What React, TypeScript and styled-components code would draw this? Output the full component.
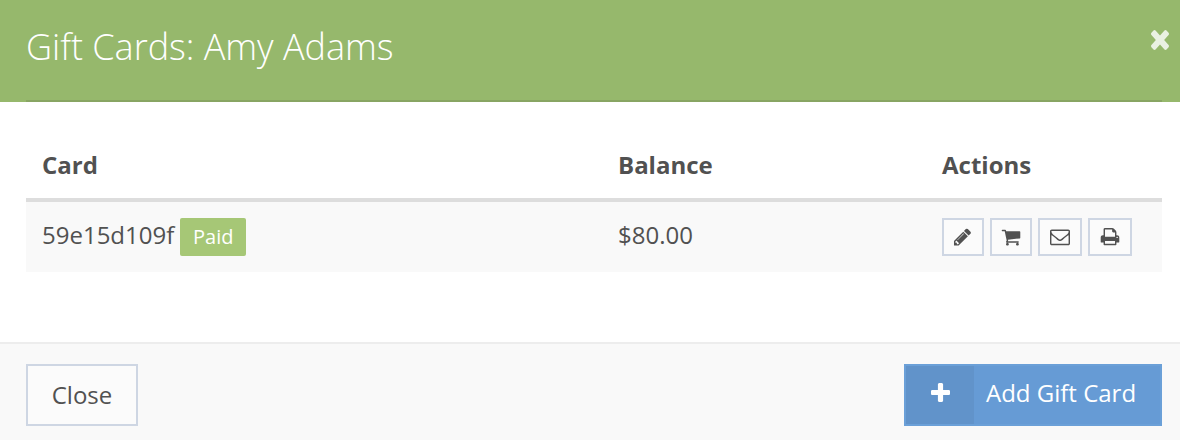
import React from "react";
import styled, { createGlobalStyle } from "styled-components";

const Global = createGlobalStyle`
  * { box-sizing: border-box; }
  body { margin: 0; background: #fff; font-family: "Open Sans", sans-serif; color: #515151; overflow: hidden; }
  button { font-family: inherit; cursor: pointer; }
`;
const Dialog = styled.div`display: flex; flex-direction: column; width: 1180px; height: 440px;`;
const Header = styled.header`
  display: flex; justify-content: space-between; align-items: flex-start;
  height: 102px; padding: 0 11px 0 26px; background: #96b86c; position: relative;
  &::after { content: ""; position: absolute; left: 26px; right: 18px; bottom: 0; height: 2px; background: #88a563; }
`;
const Title = styled.h1`margin: 22px 0 0; font-size: 36px; font-weight: 300; line-height: 50px; letter-spacing: -0.02px; color: #fff;`;
const Dismiss = styled.button`margin: 30px 0 0; padding: 0; border: 0; background: none; color: #eaf1e2;`;
const Body = styled.main`flex: 1; padding: 28px 18px 0 26px;`;
const Columns = styled.div`
  display: grid; grid-template-columns: 576px 324px 1fr; align-items: start; padding-left: 16px;
  font-size: 24px; line-height: 34px;
`;
const HeadRow = styled(Columns)`height: 72px; padding-top: 18px; font-weight: 700; border-bottom: 4px solid #ddd;`;
const CardRow = styled(Columns)`height: 70px; padding-top: 16px; background: #f9f9f9;`;
const Cell = styled.div`display: flex; align-items: flex-start;`;
const Badge = styled.span`
  margin-left: 6px; width: 66px; height: 38px; border-radius: 2px; background: #a6c776; color: #fff;
  font-size: 20px; line-height: 38px; text-align: center;
`;
const Actions = styled.div`display: flex; gap: 6px;`;
const IconButton = styled.button<{ $w: number }>`
  display: flex; align-items: center; justify-content: center; padding: 0;
  width: ${(p) => p.$w}px; height: 38px; border: 2px solid #ced6e3; background: #fbfbfb; color: #515151;
`;
const Footer = styled.footer`
  display: flex; justify-content: space-between; height: 98px; padding: 20px 18px 0 26px;
  background: #f9f9f9; border-top: 2px solid #ededed;
`;
const CloseButton = styled.button`
  width: 112px; height: 62px; padding: 0; border: 2px solid #ced6e3; background: #fbfbfb; color: #515151;
  font-size: 24px; line-height: 58px;
`;
const AddButton = styled.button`
  display: flex; width: 258px; height: 62px; padding: 0; border: 2px solid #6ba0d8; background: #669bd5; color: #fff;
  font-size: 24px; line-height: 54px;
`;
const AddIcon = styled.span`
  display: flex; width: 68px; height: 58px; padding: 17px 0 0 25px; background: #6193ca;
`;
const AddLabel = styled.span`flex: 1; padding-left: 12px; text-align: left; white-space: nowrap;`;
const Glyph = styled.svg`display: block; flex: none; fill: currentColor; overflow: visible;`;

const paths = {
  pencil: "M491 1536l91-91-235-235-91 91v107h128v128h107zm523-928q0-22-22-22-10 0-17 7l-542 542q-7 7-7 17 0 22 22 22 10 0 17-7l542-542q7-7 7-17zm-54-192l416 416-832 832h-416v-416zm683 96q0 53-37 90l-166 166-416-416 166-165q36-38 90-38 53 0 91 38l235 234q37 39 37 91z",
  cart: "M704 1536q0 52-38 90t-90 38-90-38-38-90 38-90 90-38 90 38 38 90zm896 0q0 52-38 90t-90 38-90-38-38-90 38-90 90-38 90 38 38 90zm128-1088v512q0 24-16.5 42.5t-40.5 21.5l-1044 122q13 60 13 70 0 16-24 64h920q26 0 45 19t19 45-19 45-45 19h-1024q-26 0-45-19t-19-45q0-11 8-31.5t16-36 21.5-40 15.5-29.5l-177-823h-204q-26 0-45-19t-19-45 19-45 45-19h256q16 0 28.5 6.5t19.5 15.5 13 24.5 8 26 5.5 29.5 4.5 26h1201q26 0 45 19t19 45z",
  envelope: "M1664 1504v-768q-32 36-69 66-268 206-426 338-51 43-83 67t-86.5 48.5-102.5 24.5h-2q-48 0-102.5-24.5t-86.5-48.5-83-67q-158-132-426-338-37-30-69-66v768q0 13 9.5 22.5t22.5 9.5h1472q13 0 22.5-9.5t9.5-22.5zm0-1051v-24.5l-.5-13-3-12.5-5.5-9-9-7.5-14-2.5h-1472q-13 0-22.5 9.5t-9.5 22.5q0 168 147 284 193 152 401 317 6 5 35 29.5t46 37.5 44.5 31.5 50.5 27.5 43 9h2q20 0 43-9t50.5-27.5 44.5-31.5 46-37.5 35-29.5q208-165 401-317 54-43 100.5-115.5t46.5-131.5zm128-37v1088q0 66-47 113t-113 47h-1472q-66 0-113-47t-47-113v-1088q0-66 47-113t113-47h1472q66 0 113 47t47 113z",
  print: "M448 1536h896v-256h-896v256zm0-640h896v-384h-160q-40 0-68-28t-28-68v-160h-640v640zm1152 64q0-26-19-45t-45-19-45 19-19 45 19 45 45 19 45-19 19-45zm128 0v416q0 13-9.5 22.5t-22.5 9.5h-224v160q0 40-28 68t-68 28h-960q-40 0-68-28t-28-68v-160h-224q-13 0-22.5-9.5t-9.5-22.5v-416q0-79 56.5-135.5t135.5-56.5h64v-544q0-40 28-68t68-28h672q40 0 88 20t76 48l152 152q28 28 48 76t20 88v256h64q79 0 135.5 56.5t56.5 135.5z",
  plus: "M1600 736v192q0 40-28 68t-68 28h-416v416q0 40-28 68t-68 28h-192q-40 0-68-28t-28-68v-416h-416q-40 0-68-28t-28-68v-192q0-40 28-68t68-28h416v-416q0-40 28-68t68-28h192q40 0 68 28t28 68v416h416q40 0 68 28t28 68z",
  times: "M1490 1322q0 40-28 68l-136 136q-28 28-68 28t-68-28l-294-294-294 294q-28 28-68 28t-68-28l-136-136q-28-28-28-68t28-68l294-294-294-294q-28-28-28-68t28-68l136-136q28-28 68-28t68 28l294 294 294-294q28-28 68-28t68 28l136 136q28 28 28 68t-28 68l-294 294 294 294q28 28 28 68z",
};

interface IconProps { name: keyof typeof paths; width?: number; height?: number; box?: string }

function Icon({ name, width = 20, height = 20, box = "0 0 1792 1792" }: IconProps) {
  return <Glyph width={width} height={height} viewBox={box} preserveAspectRatio="none"><path d={paths[name]} /></Glyph>;
}

export default function App() {
  return (
    <Dialog>
      <Global />
      <Header>
        <Title>Gift Cards: Amy Adams</Title>
        <Dismiss aria-label="Dismiss"><Icon name="times" width={18} height={20} box="302 366 1188 1188" /></Dismiss>
      </Header>
      <Body>
        <HeadRow><Cell>Card</Cell><Cell>Balance</Cell><Cell>Actions</Cell></HeadRow>
        <CardRow>
          <Cell>59e15d109f<Badge>Paid</Badge></Cell>
          <Cell>$80.00</Cell>
          <Actions>
            <IconButton $w={42} aria-label="Edit"><Icon name="pencil" box="40 0 1792 1792" /></IconButton>
            <IconButton $w={42} aria-label="Cart"><Icon name="cart" /></IconButton>
            <IconButton $w={44} aria-label="Email"><Icon name="envelope" box="0 30 1792 1792" /></IconButton>
            <IconButton $w={44} aria-label="Print"><Icon name="print" box="0 30 1792 1792" /></IconButton>
          </Actions>
        </CardRow>
      </Body>
      <Footer>
        <CloseButton>Close</CloseButton>
        <AddButton>
          <AddIcon><Icon name="plus" width={19} height={19} box="192 128 1408 1408" /></AddIcon>
          <AddLabel>Add Gift Card</AddLabel>
        </AddButton>
      </Footer>
    </Dialog>
  );
}
